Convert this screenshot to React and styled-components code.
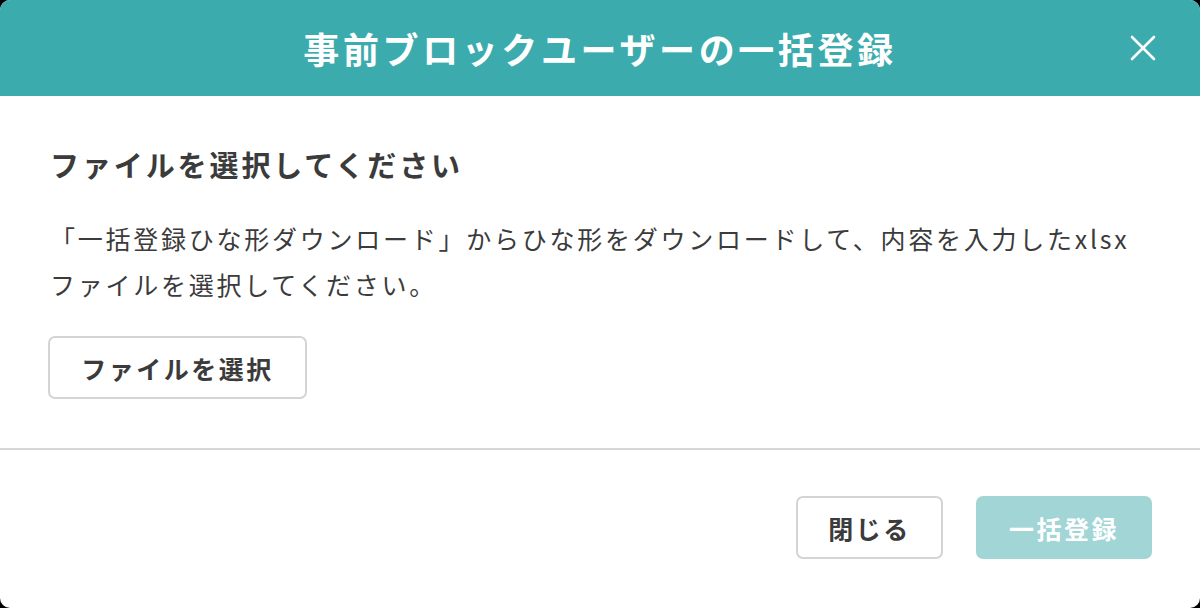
import React from "react";
import styled, { createGlobalStyle } from "styled-components";

const GlobalStyle = createGlobalStyle`
  html, body {
    margin: 0;
    padding: 0;
    background: #000;
  }
  body {
    font-family: "Noto Sans CJK JP", "Noto Sans", sans-serif;
  }
`;

const Dialog = styled.div`
  width: 1200px;
  height: 608px;
  background: #fff;
  border-radius: 10px;
  overflow: hidden;
  display: flex;
  flex-direction: column;
`;

const Header = styled.div`
  position: relative;
  height: 96px;
  flex: none;
  background: #3cabae;
  display: flex;
  align-items: center;
  justify-content: center;
`;

const Title = styled.h1`
  margin: 0;
  color: #fff;
  font-size: 36px;
  font-weight: 700;
  letter-spacing: 0.1em;
  line-height: 1;
`;

const CloseButton = styled.button`
  position: absolute;
  right: 37px;
  top: 28px;
  width: 40px;
  height: 40px;
  padding: 0;
  border: none;
  background: transparent;
  display: flex;
  align-items: center;
  justify-content: center;
  cursor: pointer;
`;

const Body = styled.div`
  padding: 48px 50px 0;
  height: 354px;
  box-sizing: border-box;
  border-bottom: 2px solid #d6d6d6;
  color: #3b3b3b;
`;

const Heading = styled.h2`
  margin: 0;
  font-size: 29px;
  font-weight: 700;
  letter-spacing: 0.1em;
  line-height: 40px;
`;

const Text = styled.p`
  margin: 31px 0 0;
  font-size: 25px;
  letter-spacing: 0.11em;
  line-height: 46px;
`;

const Button = styled.button`
  font-family: inherit;
  font-size: 25px;
  font-weight: 700;
  letter-spacing: 0.1em;
  height: 63px;
  padding: 0 ${(p) => p.$px || 30}px;
  border-radius: 7px;
  border: 2px solid ${(p) => (p.$primary ? "#a1d5d6" : "#d4d4d4")};
  background: ${(p) => (p.$primary ? "#a1d5d6" : "#fff")};
  color: ${(p) => (p.$primary ? "#fff" : "#3b3b3b")};
  box-sizing: border-box;
  cursor: pointer;
`;

const FileButton = styled(Button)`
  margin-top: 29px;
  margin-left: -2px;
  width: 259px;
`;

const Footer = styled.div`
  flex: 1;
  display: flex;
  justify-content: flex-end;
  align-items: flex-start;
  gap: 33px;
  padding: 46px 48px 0;
`;

const App = () => {
  return (
    <>
      <GlobalStyle />
      <Dialog>
        <Header>
          <Title>事前ブロックユーザーの一括登録</Title>
          <CloseButton aria-label="閉じる">
            <svg width="26" height="26" viewBox="0 0 26 26">
              <path d="M2 2L24 24M24 2L2 24" stroke="#fff" strokeWidth="2.6" strokeLinecap="round" />
            </svg>
          </CloseButton>
        </Header>
        <Body>
          <Heading>ファイルを選択してください</Heading>
          <Text>
            「一括登録ひな形ダウンロード」からひな形をダウンロードして、内容を入力したxlsx
            <br />
            ファイルを選択してください。
          </Text>
          <FileButton>ファイルを選択</FileButton>
        </Body>
        <Footer>
          <Button style={{ width: 147 }}>閉じる</Button>
          <Button $primary style={{ width: 176 }}>一括登録</Button>
        </Footer>
      </Dialog>
    </>
  );
};

export default App;
